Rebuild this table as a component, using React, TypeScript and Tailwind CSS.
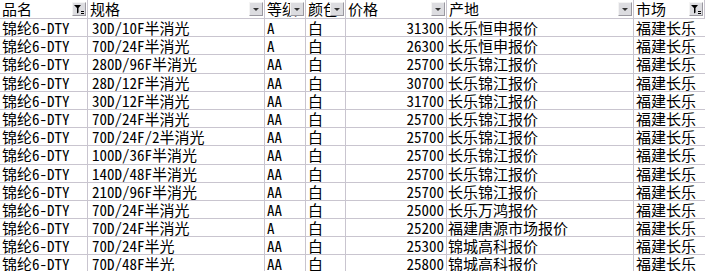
import React from 'react';

type Row = [string, string, string, string, string, string, string];

const rows: Row[] = [
  ['锦纶6-DTY', '30D/10F半消光', 'A', '白', '31300', '长乐恒申报价', '福建长乐'],
  ['锦纶6-DTY', '70D/24F半消光', 'A', '白', '26300', '长乐恒申报价', '福建长乐'],
  ['锦纶6-DTY', '280D/96F半消光', 'AA', '白', '25700', '长乐锦江报价', '福建长乐'],
  ['锦纶6-DTY', '28D/12F半消光', 'AA', '白', '30700', '长乐锦江报价', '福建长乐'],
  ['锦纶6-DTY', '30D/12F半消光', 'AA', '白', '31700', '长乐锦江报价', '福建长乐'],
  ['锦纶6-DTY', '70D/24F半消光', 'AA', '白', '25700', '长乐锦江报价', '福建长乐'],
  ['锦纶6-DTY', '70D/24F/2半消光', 'AA', '白', '25700', '长乐锦江报价', '福建长乐'],
  ['锦纶6-DTY', '100D/36F半消光', 'AA', '白', '25700', '长乐锦江报价', '福建长乐'],
  ['锦纶6-DTY', '140D/48F半消光', 'AA', '白', '25700', '长乐锦江报价', '福建长乐'],
  ['锦纶6-DTY', '210D/96F半消光', 'AA', '白', '25700', '长乐锦江报价', '福建长乐'],
  ['锦纶6-DTY', '70D/24F半消光', 'AA', '白', '25000', '长乐万鸿报价', '福建长乐'],
  ['锦纶6-DTY', '70D/24F半消光', 'A', '白', '25200', '福建唐源市场报价', '福建长乐'],
  ['锦纶6-DTY', '70D/24F半光', 'AA', '白', '25300', '锦城高科报价', '福建长乐'],
  ['锦纶6-DTY', '70D/48F半光', 'AA', '白', '25800', '锦城高科报价', '福建长乐'],
];

const headers: { label: string; filtered: boolean }[] = [
  { label: '品名', filtered: true },
  { label: '规格', filtered: false },
  { label: '等级', filtered: false },
  { label: '颜色', filtered: false },
  { label: '价格', filtered: false },
  { label: '产地', filtered: false },
  { label: '市场', filtered: true },
];

const font = {
  fontFamily: '"Noto Sans Mono CJK SC", "Noto Sans CJK SC", "Liberation Mono", monospace',
};

function FilterButton({ filtered }: { filtered: boolean }) {
  return (
    <div className="absolute right-[1px] top-[2px] w-[14px] h-[14px] border border-t-[#f4f4f4] border-l-[#f4f4f4] border-r-[#9a98a0] border-b-[#9a98a0] bg-[#dcdce0] flex items-center justify-center">
      {filtered ? (
        <svg width="12" height="12" viewBox="0 0 12 12">
          <path d="M1 2h7L5.5 5v4.5L4 10.5V5z" fill="#000" />
          <rect x="8" y="8" width="3" height="1" fill="#000" />
          <rect x="8" y="10" width="3" height="1" fill="#000" />
        </svg>
      ) : (
        <svg width="8" height="5" viewBox="0 0 8 5">
          <path d="M1 1h6L4 4z" fill="#333" />
        </svg>
      )}
    </div>
  );
}

const cols = 'grid grid-cols-[88px_177px_41px_40px_101px_187px_71px]';
const cell = 'relative h-[18.2px] leading-[18px] border-r border-b border-[#c9c5cf] overflow-hidden whitespace-nowrap text-[15px] text-black';

export default function App() {
  return (
    <div className="w-[705px] h-[271px] bg-white overflow-hidden" style={font}>
      <div className={cols}>
        {headers.map((h) => (
          <div key={h.label} className={`${cell} pl-[2px] h-[19px]`}>
            {h.label}
            <FilterButton filtered={h.filtered} />
          </div>
        ))}
      </div>
      {rows.map((r, i) => (
        <div key={i} className={cols}>
          <div className={`${cell} pl-[2px]`}>{r[0]}</div>
          <div className={`${cell} pl-[4px]`}>{r[1]}</div>
          <div className={`${cell} pl-[2px] text-[13px]`}>{r[2]}</div>
          <div className={`${cell} pl-[2px]`}>{r[3]}</div>
          <div className={`${cell} pr-[2px] text-right`}>{r[4]}</div>
          <div className={`${cell} pl-[1px]`}>{r[5]}</div>
          <div className={`${cell} pl-[2px] border-r-0`}>{r[6]}</div>
        </div>
      ))}
    </div>
  );
}
